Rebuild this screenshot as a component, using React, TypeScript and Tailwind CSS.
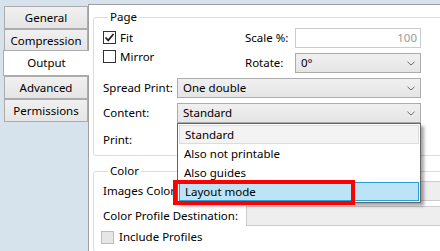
import React from "react";

const Chevron = () => (
  <svg width="8" height="5" viewBox="0 0 8 5" className="shrink-0">
    <path d="M0.5 0.8 L4 4 L7.5 0.8" fill="none" stroke="#6d6d6d" strokeWidth="1" />
  </svg>
);

const Select = ({ text, w }: { text?: string; w: string }) => (
  <div
    className={`${w} h-[20px] flex items-center justify-between pl-[5px] pr-[5px] border border-[#acacac] bg-gradient-to-b from-[#f0f0f0] to-[#e5e5e5]`}
  >
    <span>{text}</span>
    <Chevron />
  </div>
);

const Check = ({ checked, disabled }: { checked?: boolean; disabled?: boolean }) => (
  <div
    className={`w-[13px] h-[13px] border flex items-center justify-center ${
      disabled ? "bg-[#e6e6e6] border-[#bcbcbc]" : "bg-white border-[#333333]"
    }`}
  >
    {checked && (
      <svg width="11" height="11" viewBox="0 0 11 11">
        <path d="M1.5 5.5 L4.2 8.3 L9.5 2" fill="none" stroke="#222" strokeWidth="1.8" />
      </svg>
    )}
  </div>
);

const Tab = ({ label }: { label: string }) => (
  <div className="ml-[4px] w-[84px] h-[23px] border border-[#acacac] bg-gradient-to-b from-[#f0f0f0] to-[#e5e5e5] flex items-center justify-center">
    {label}
  </div>
);

export default function App() {
  return (
    <div className="relative w-[440px] h-[251px] overflow-hidden bg-[#d6e2ec] flex text-[11.5px] leading-[16px] text-black font-['Noto_Sans','Open_Sans',sans-serif]">
      {/* Tabs */}
      <div className="w-[88px] shrink-0 pt-[6px] flex flex-col relative z-10">
        <Tab label="General" />
        <Tab label="Compression" />
        <div className="-mt-[2px] ml-[3px] w-[86px] h-[26px] bg-white border-l border-t border-b border-[#acacac] flex items-center justify-center">
          Output
        </div>
        <Tab label="Advanced" />
        <Tab label="Permissions" />
      </div>

      {/* Panel */}
      <div className="flex-1 mt-[4px] bg-white border-l border-t border-[#a0a0a0] overflow-hidden pt-[4px] pl-[4px]">
        <fieldset className="w-[380px] border border-[#dcdcdc] rounded-[3px] pl-[9px] pb-[5px]">
          <legend className="ml-[5px] px-[2px] leading-[16px]">Page</legend>
          <div className="flex">
            <div className="w-[142px] pt-[6px] flex flex-col gap-[6px]">
              <div className="flex items-center gap-[4px] h-[13px]">
                <Check checked />
                <span>Fit</span>
              </div>
              <div className="flex items-center gap-[4px] h-[13px]">
                <Check />
                <span>Mirror</span>
              </div>
            </div>
            <div className="flex flex-col gap-[5px] pt-[3px]">
              <div className="flex items-center">
                <span className="w-[50px]">Scale %:</span>
                <div className="w-[126px] h-[20px] border border-[#cccccc] bg-white flex items-center justify-end pr-[3px] text-[#9a9a9a]">
                  100
                </div>
              </div>
              <div className="flex items-center">
                <span className="w-[50px]">Rotate:</span>
                <Select text="0°" w="w-[126px]" />
              </div>
            </div>
          </div>
          <div className="flex items-center mt-[5px]">
            <span className="w-[74px]">Spread Print:</span>
            <Select text="One double" w="w-[244px]" />
          </div>
          <div className="flex items-center mt-[5px]">
            <span className="w-[74px]">Content:</span>
            <Select text="Standard" w="w-[244px]" />
          </div>
          <div className="flex items-center mt-[7px]">
            <span className="w-[74px]">Print:</span>
            <Select w="w-[244px]" />
          </div>
        </fieldset>

        <fieldset className="mt-[7px] w-[380px] border border-[#dcdcdc] rounded-[3px] pl-[9px] pb-[6px]">
          <legend className="ml-[5px] px-[2px] leading-[16px]">Color</legend>
          <div className="flex items-center mt-[2px]">
            <span className="w-[143px] whitespace-nowrap">Images Color</span>
            <div className="w-[220px] h-[20px] border border-[#cccccc] bg-[#eeeeee]" />
          </div>
          <div className="flex items-center mt-[5px]">
            <span className="w-[143px] whitespace-nowrap">Color Profile Destination:</span>
            <div className="w-[220px] h-[20px] border border-[#cccccc] bg-[#eeeeee]" />
          </div>
          <div className="flex items-center gap-[5px] mt-[3px] -ml-[2px]">
            <Check disabled />
            <span>Include Profiles</span>
          </div>
        </fieldset>
      </div>

      {/* Dropdown list */}
      <div className="absolute left-[177px] top-[123px] w-[244px] bg-white border border-[#646464] shadow-[3px_3px_3px_rgba(0,0,0,0.35)] z-20 p-px">
        <div className="h-[19px] flex items-center pl-[5px] bg-[#f3f3f3] border border-[#dcdcdc]">Standard</div>
        <div className="h-[19px] flex items-center pl-[5px]">Also not printable</div>
        <div className="h-[19px] flex items-center pl-[5px]">Also guides</div>
        <div className="h-[19px] flex items-center pl-[5px] bg-[#bce3f6] border border-[#26a0da]">Layout mode</div>
      </div>

      {/* Red highlight */}
      <div className="absolute left-[173px] top-[180px] w-[182px] h-[25px] border-[4px] border-[#ff0000] z-30" />
    </div>
  );
}
